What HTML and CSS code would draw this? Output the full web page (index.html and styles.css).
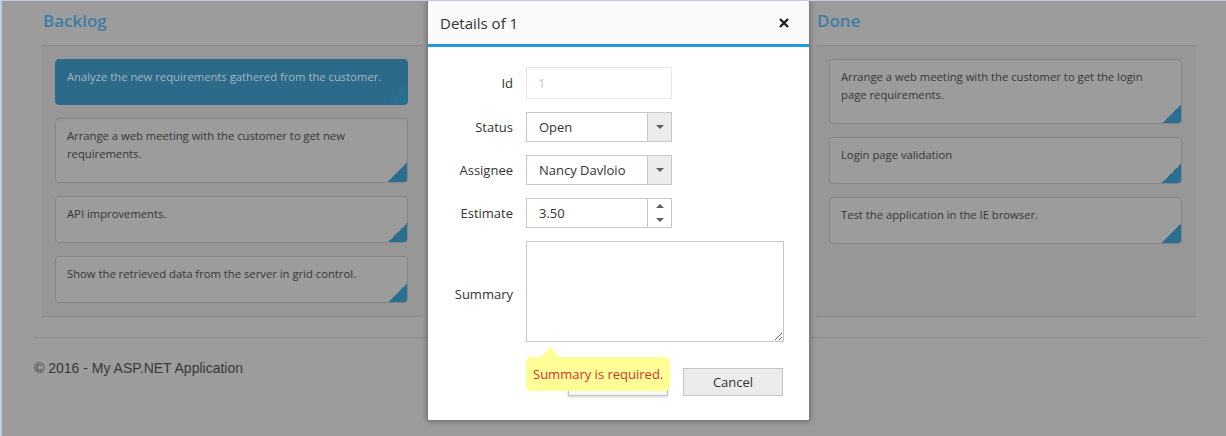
FILE: index.html
```html
<!DOCTYPE html>
<html lang="en">
<head>
<meta charset="utf-8">
<title>Kanban - Details of 1</title>
<link rel="stylesheet" href="styles.css">
</head>
<body>
<div class="page">
  <main class="board">
    <section class="col">
      <h2 class="col-title">Backlog</h2>
      <div class="col-body">
        <div class="card selected">Analyze the new requirements gathered from the customer.</div>
        <div class="card">Arrange a web meeting with the customer to get new requirements.</div>
        <div class="card">API improvements.</div>
        <div class="card">Show the retrieved data from the server in grid control.</div>
      </div>
    </section>
    <section class="col" aria-hidden="true">
      <div class="col-title"></div>
      <div class="col-body"></div>
    </section>
    <section class="col">
      <h2 class="col-title">Done</h2>
      <div class="col-body">
        <div class="card">Arrange a web meeting with the customer to get the login page requirements.</div>
        <div class="card">Login page validation</div>
        <div class="card">Test the application in the IE browser.</div>
      </div>
    </section>
  </main>
  <footer class="footer">
    <hr class="rule">
    <p class="copy">&copy; 2016 - My ASP.NET Application</p>
  </footer>
</div>

<div class="dialog" role="dialog" aria-label="Details of 1">
  <div class="dlg-head">
    <span class="dlg-title">Details of 1</span>
    <svg class="close" width="10" height="10" viewBox="0 0 10 10"><path d="M1 1L9 9M9 1L1 9" stroke="#1f1f1f" stroke-width="2.3"/></svg>
  </div>
  <form class="dlg-form">
    <label class="lbl">Id</label>
    <div class="field field-id"><span class="val">1</span></div>

    <label class="lbl">Status</label>
    <div class="field"><span class="val">Open</span><span class="drop"><svg width="8" height="4" viewBox="0 0 8 4"><path d="M0 0H8L4 4Z" fill="#5e5e5e"/></svg></span></div>

    <label class="lbl">Assignee</label>
    <div class="field"><span class="val">Nancy Davloio</span><span class="drop"><svg width="8" height="4" viewBox="0 0 8 4"><path d="M0 0H8L4 4Z" fill="#5e5e5e"/></svg></span></div>

    <label class="lbl">Estimate</label>
    <div class="field"><span class="val">3.50</span><span class="spin"><span class="spin-btn"><svg width="8" height="4" viewBox="0 0 8 4"><path d="M0 4H8L4 0Z" fill="#5e5e5e"/></svg></span><span class="spin-btn"><svg width="8" height="4" viewBox="0 0 8 4"><path d="M0 0H8L4 4Z" fill="#5e5e5e"/></svg></span></span></div>

    <label class="lbl lbl-summary">Summary</label>
    <div class="summary-wrap">
      <textarea class="summary"></textarea>
      <div class="tip">Summary is required.</div>
    </div>

    <div class="actions">
      <button type="button" class="btn btn-save">Save</button>
      <button type="button" class="btn">Cancel</button>
    </div>
  </form>
</div>
</body>
</html>
```
FILE: styles.css
```css
* { box-sizing: border-box; }

html, body {
  margin: 0;
  height: 100%;
}

body {
  position: relative;
  overflow: hidden;
  background: #9c9c9c;
  border-top: 1px solid #c2cce1;
  border-left: 2px solid #c2cce1;
  font-family: "Open Sans", "Noto Sans", sans-serif;
}

.board {
  display: grid;
  grid-template-columns: repeat(3, 380px);
  column-gap: 7px;
  padding-left: 40px;
}

.col {
  display: flex;
  flex-direction: column;
}

.col-title {
  margin: 0;
  height: 45px;
  padding: 10px 0 0 1px;
  border-bottom: 1px solid #878787;
  font-size: 17px;
  font-weight: 600;
  line-height: 20px;
  color: #3d7ca3;
}

.col-body {
  flex: 1;
  display: flex;
  flex-direction: column;
  gap: 13px;
  padding: 13px 14px 13px 13px;
  background: #979797;
  border-bottom: 1px solid #878787;
}

.card {
  position: relative;
  overflow: hidden;
  padding: 8px 14px 19px 11px;
  border: 1px solid #858585;
  border-radius: 4px;
  background: #9c9c9c;
  font-size: 11.25px;
  line-height: 18px;
  color: #363636;
}

.card::after {
  content: "";
  position: absolute;
  right: 0;
  bottom: 0;
  width: 19px;
  height: 19px;
  background: linear-gradient(to bottom right, transparent 50%, #2a6e90 50%);
}

.card.selected {
  padding-bottom: 18px;
  background: #2b6a89;
  border-color: #2b6a89;
  color: #a6b7c3;
}

.footer {
  width: 1169px;
  margin: 20px 0 0 32px;
}

.rule {
  margin: 0;
  border: 0;
  border-top: 1px solid #8f8f8f;
}

.copy {
  margin: 20px 0 0 0;
  font-family: "Liberation Sans", Arial, sans-serif;
  font-size: 14px;
  line-height: 20px;
  color: #383838;
}

/* dialog */
.dialog {
  position: absolute;
  left: 425px;
  top: 0;
  width: 383px;
  height: 420px;
  background: #fff;
  border: 1px solid #7c7c7c;
  border-top: 0;
  box-shadow: 0 0 6px rgba(0, 0, 0, 0.35);
}

.dlg-head {
  height: 46px;
  display: flex;
  align-items: center;
  justify-content: space-between;
  padding: 1px 20px 0 12px;
  background: #fafafa;
  border-bottom: 3px solid #1e9bd8;
}

.dlg-title {
  font-size: 15px;
  line-height: 20px;
  color: #333;
}

.close {
  display: block;
}

.dlg-form {
  display: grid;
  grid-template-columns: 85px 258px;
  column-gap: 13px;
  row-gap: 13px;
  align-items: center;
  margin: 0;
  padding-top: 20px;
}

.lbl {
  text-align: right;
  font-size: 13px;
  line-height: 18px;
  color: #333;
}

.lbl-summary {
  padding-top: 5px;
}

.field {
  width: 146px;
  height: 30px;
  display: flex;
  align-items: stretch;
  border: 1px solid #c8c8c8;
  font-size: 13px;
  color: #333;
}

.field .val {
  flex: 1;
  display: flex;
  align-items: center;
  padding-left: 12px;
}

.field-id {
  height: 32px;
  border-color: #e6e6e6;
  color: #c4c4c4;
}

.field-id .val {
  padding-left: 11px;
}

.drop {
  width: 24px;
  display: flex;
  align-items: center;
  justify-content: center;
  background: #ececec;
  border-left: 1px solid #c8c8c8;
}

.spin {
  width: 24px;
  display: flex;
  flex-direction: column;
  border-left: 1px solid #c8c8c8;
}

.spin-btn {
  flex: 1;
  display: flex;
  align-items: center;
  justify-content: center;
}

.summary-wrap {
  position: relative;
  height: 101px;
}

.summary {
  display: block;
  width: 258px;
  height: 101px;
  margin: 0;
  border: 1px solid #c8c8c8;
  font-family: inherit;
}

.tip {
  position: absolute;
  z-index: 2;
  top: calc(100% + 15px);
  left: 0;
  height: 34px;
  padding: 0 7px;
  border-radius: 5px;
  background: #ffff96;
  font-size: 13px;
  line-height: 34px;
  color: #dc2f2f;
  white-space: nowrap;
}

.tip::before {
  content: "";
  position: absolute;
  top: -10px;
  left: 15px;
  width: 0;
  height: 0;
  border-left: 9px solid transparent;
  border-right: 9px solid transparent;
  border-bottom: 10px solid #ffff96;
}

.actions {
  grid-column: 2;
  display: flex;
  justify-content: flex-end;
  gap: 15px;
  margin-top: 13px;
  padding-right: 1px;
}

.btn {
  width: 100px;
  height: 28px;
  padding: 0;
  border: 1px solid #c3c3c3;
  background: #ececec;
  font-family: inherit;
  font-size: 13px;
  color: #333;
}

.btn-save {
  background: #f6f6f6;
  box-shadow: 0 1px 3px rgba(0, 0, 0, 0.18);
}
```
